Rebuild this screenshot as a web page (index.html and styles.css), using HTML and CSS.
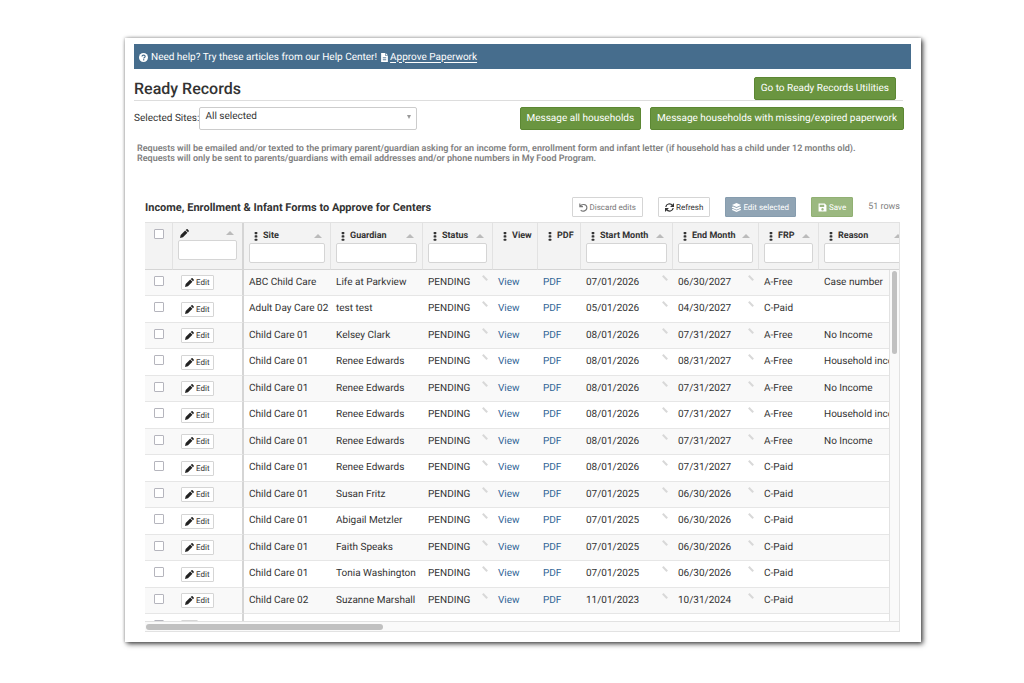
FILE: index.html
```
<!DOCTYPE html>
<html lang="en">

<head>
    <meta charset="UTF-8">
    <meta name="viewport" content="width=device-width, initial-scale=1.0">
    <title>Ready Records</title>
    <link rel="stylesheet" href="styles.css">
</head>

<body>
    <!-- Shared icons -->
    <svg class="sprite" aria-hidden="true">
        <symbol id="pencil" viewBox="0 0 16 16">
            <path d="M0 16l1.200-5.200L9.200 2.800l4 4L5.200 14.800z" />
            <path d="M10.200 1.800L11.500.6q1-.9 2 0l1.900 1.900q.9 1 0 2l-1.200 1.300z" />
        </symbol>
        <symbol id="sort" viewBox="0 0 8 4">
            <path d="M0 4L4 0l4 4z" />
        </symbol>
        <symbol id="dots" viewBox="0 0 4 10">
            <rect x=".5" y="0" width="3" height="2.400" rx=".6" />
            <rect x=".5" y="3.700" width="3" height="2.400" rx=".6" />
            <rect x=".5" y="7.400" width="3" height="2.400" rx=".6" />
        </symbol>
    </svg>

    <main class="page">
        <!-- Help bar -->
        <div class="help-bar">
            <svg class="icon" viewBox="0 0 16 16" aria-hidden="true">
                <circle cx="8" cy="8" r="8" fill="#fff" />
                <path d="M5.200 6.200C5.400 2.900 11 2.900 11 6.200 11 8.200 8.300 8 8.300 9.900" fill="none" stroke="#466d8d" stroke-width="2" />
                <rect x="7.200" y="11" width="2.200" height="2.200" fill="#466d8d" />
            </svg>
            <span>Need help? Try these articles from our Help Center!</span>
            <a href="#approve">
                <svg class="icon" viewBox="0 0 16 16" aria-hidden="true">
                    <path d="M2 0h7v5h5v11H2z" fill="#fff" />
                    <path d="M10 0l4 4h-4z" fill="#fff" />
                    <path d="M5 8.500h6M5 12h6" stroke="#466d8d" stroke-width="1.600" />
                </svg>
                <span>Approve Paperwork</span>
            </a>
        </div>

        <!-- Title -->
        <header class="title-row">
            <h1>Ready Records</h1>
            <button type="button" class="btn-green">Go to Ready Records Utilities</button>
        </header>

        <!-- Site selection and messages -->
        <div class="site-row">
            <label for="sites">Selected Sites:</label>
            <div class="select-wrap">
                <select id="sites">
                    <option>All selected</option>
                </select>
            </div>
            <div class="messages">
                <button type="button" class="btn-green">Message all households</button>
                <button type="button" class="btn-green">Message households with missing/expired paperwork</button>
            </div>
        </div>

        <p class="note">Requests will be emailed and/or texted to the primary parent/guardian asking for an income form, enrollment form and infant letter (if household has a child under 12 months old).<br>Requests will only be sent to parents/guardians with email addresses and/or phone numbers in My Food Program.</p>

        <!-- Forms to approve -->
        <section class="forms">
            <div class="toolbar">
                <h2>Income, Enrollment &amp; Infant Forms to Approve for Centers</h2>
                <button type="button" class="btn-tool discard">
                    <svg class="icon" viewBox="0 0 16 16" aria-hidden="true">
                        <path d="M1.500 1v5.500H7M2 6C4.500 1 13.500 1.500 14 8c0 6.500-7.500 8-11 4.500" fill="none" stroke="currentColor" stroke-width="2" />
                    </svg>Discard edits
                </button>
                <button type="button" class="btn-tool">
                    <svg class="icon" viewBox="0 0 16 16" aria-hidden="true">
                        <path d="M1.500 7C2 1.500 9.500-.5 13.500 4.500M14.500 9C14 14.500 6.500 16.500 2.500 11.500" fill="none" stroke="currentColor" stroke-width="2.200" />
                        <path d="M16 0v7H9zM0 16V9h7z" fill="currentColor" />
                    </svg>Refresh
                </button>
                <button type="button" class="btn-tool edit-selected">
                    <svg class="icon" viewBox="0 0 16 16" aria-hidden="true" fill="currentColor">
                        <path d="M8 0l8 3.600-8 3.600-8-3.600z" />
                        <path d="M0 7l2-.8 6 2.700 6-2.700 2 .8v1.500l-8 3.600-8-3.600z" />
                        <path d="M0 11.300l2-.8 6 2.700 6-2.700 2 .8v1L8 16l-8-3.700z" />
                    </svg>Edit selected
                </button>
                <button type="button" class="btn-tool save">
                    <svg class="icon" viewBox="0 0 16 16" aria-hidden="true">
                        <path d="M1 1h11l3 3v11H1zM3 3v4h8V3zM8 9a2.200 2.200 0 1 0 .1 0z" fill="currentColor" fill-rule="evenodd" />
                    </svg>Save
                </button>
                <span class="row-count">51 rows</span>
            </div>

            <div class="grid">
                <div class="grid-view">
                    <table>
                        <colgroup>
                            <col class="col-check">
                            <col class="col-edit">
                            <col class="col-site">
                            <col class="col-month">
                            <col class="col-status">
                            <col class="col-view">
                            <col class="col-pdf">
                            <col class="col-month">
                            <col class="col-end">
                            <col class="col-frp">
                            <col class="col-month">
                        </colgroup>
                        <thead>
                            <tr id="grid-head"></tr>
                        </thead>
                        <tbody id="grid-body"></tbody>
                    </table>
                    <div class="scroll-y"><div class="thumb"></div></div>
                </div>
                <div class="scroll-x"><div class="thumb"></div></div>
            </div>
        </section>
    </main>

    <script>
        const columns = ["Site", "Guardian", "Status", "View", "PDF", "Start Month", "End Month", "FRP", "Reason"];

        const records = [
            ["ABC Child Care", "Life at Parkview", "07/01/2026", "06/30/2027", "A-Free", "Case number"],
            ["Adult Day Care 02", "test test", "05/01/2026", "04/30/2027", "C-Paid", ""],
            ["Child Care 01", "Kelsey Clark", "08/01/2026", "07/31/2027", "A-Free", "No Income"],
            ["Child Care 01", "Renee Edwards", "08/01/2026", "08/31/2027", "A-Free", "Household income"],
            ["Child Care 01", "Renee Edwards", "08/01/2026", "07/31/2027", "A-Free", "No Income"],
            ["Child Care 01", "Renee Edwards", "08/01/2026", "07/31/2027", "A-Free", "Household income"],
            ["Child Care 01", "Renee Edwards", "08/01/2026", "07/31/2027", "A-Free", "No Income"],
            ["Child Care 01", "Renee Edwards", "08/01/2026", "07/31/2027", "C-Paid", ""],
            ["Child Care 01", "Susan Fritz", "07/01/2025", "06/30/2026", "C-Paid", ""],
            ["Child Care 01", "Abigail Metzler", "07/01/2025", "06/30/2026", "C-Paid", ""],
            ["Child Care 01", "Faith Speaks", "07/01/2025", "06/30/2026", "C-Paid", ""],
            ["Child Care 01", "Tonia Washington", "07/01/2025", "06/30/2026", "C-Paid", ""],
            ["Child Care 02", "Suzanne Marshall", "11/01/2023", "10/31/2024", "C-Paid", ""]
        ];

        const sortIcon = `<svg class="sort"><use href="#sort"/></svg>`;
        const mark = `<svg class="mark" viewBox="0 0 6 6"><path d="M.8.8L5.200 5.200"/></svg>`;

        function renderHead() {
            const cells = columns.map(name => {
                const plain = name === "View" || name === "PDF";
                return `<th>
                    <div class="head-title"><svg class="dots"><use href="#dots"/></svg><span>${name}</span>${plain ? "" : sortIcon}</div>
                    ${plain ? "" : `<input type="text" class="filter" aria-label="Filter ${name}">`}
                </th>`;
            });

            document.getElementById("grid-head").innerHTML = `
                <th class="check"><input type="checkbox" aria-label="Select all rows"></th>
                <th class="edit-head">
                    <div class="head-title"><svg class="pencil"><use href="#pencil"/></svg>${sortIcon}</div>
                    <input type="text" class="filter" aria-label="Filter edit">
                </th>` + cells.join('');
        }

        function renderRows() {
            // the last row sits mostly below the visible area
            const rows = records.concat([["", "", "", "", "", ""]]);

            document.getElementById("grid-body").innerHTML = rows.map(([site, guardian, start, end, frp, reason]) => `
                <tr>
                    <td class="check"><input type="checkbox" aria-label="Select row"></td>
                    <td class="edit"><button type="button" aria-label="Edit"><svg class="pencil"><use href="#pencil"/></svg>${site && "Edit"}</button></td>
                    <td>${site}</td>
                    <td>${guardian}</td>
                    <td><div class="editable"><span>${site && "PENDING"}</span>${mark}</div></td>
                    <td><a href="#view">${site && "View"}</a></td>
                    <td><a href="#pdf">${site && "PDF"}</a></td>
                    <td><div class="editable"><span>${start}</span>${mark}</div></td>
                    <td><div class="editable"><span>${end}</span>${mark}</div></td>
                    <td>${frp}</td>
                    <td>${reason}</td>
                </tr>
            `).join('');
        }

        renderHead();
        renderRows();
    </script>
</body>

</html>
```
FILE: styles.css
```
/* General Styles */
* {
    margin: 0;
    padding: 0;
    box-sizing: border-box;
}

body {
    font-family: Roboto, sans-serif;
    font-size: 10px;
    text-rendering: geometricPrecision;
    background: #ffffff;
    color: #333;
    padding: 38px 103px 42px 125px;
}

button,
input,
select {
    font-family: inherit;
    color: inherit;
    text-rendering: inherit;
}

button {
    cursor: pointer;
    display: flex;
    align-items: center;
    justify-content: center;
    white-space: nowrap;
}

a {
    color: #2f6496;
    text-decoration: none;
}

.sprite {
    display: none;
}

.icon {
    width: 9px;
    height: 9px;
    flex: none;
}

.page {
    background: #ffffff;
    padding: 6px 10px 10px 9px;
    box-shadow: 2px 2px 5px rgba(0, 0, 0, 0.7), 0 0 3px rgba(0, 0, 0, 0.3);
}

/* Help bar */
.help-bar {
    display: flex;
    align-items: center;
    height: 25px;
    padding: 1px 5px 0;
    gap: 3px;
    background: #466d8d;
    color: #ffffff;
}

.help-bar a {
    display: flex;
    align-items: center;
    gap: 1px;
    color: #ffffff;
}

.help-bar a span {
    text-decoration: underline;
    text-underline-offset: 2px;
}

/* Title */
.title-row {
    display: flex;
    justify-content: space-between;
    align-items: flex-end;
    height: 32px;
    padding: 0 7px 0 0;
    margin: 0 8px 0 0;
    border-bottom: 1px solid #dddddd;
}

.title-row h1 {
    padding-bottom: 2px;
    font-size: 16px;
    font-weight: 500;
}

.btn-green {
    height: 23px;
    padding: 0 6px;
    font-size: 10px;
    font-weight: 400;
    color: #ffffff;
    background: #6a9540;
    border: 1px solid #5c8733;
    border-radius: 2px;
}

/* Site selection */
.site-row {
    display: flex;
    align-items: center;
    margin: 6px 7px 0 0;
}

.select-wrap {
    position: relative;
    width: 218px;
}

.select-wrap::after {
    content: "";
    position: absolute;
    right: 6px;
    top: 8px;
    border: 2px solid transparent;
    border-top: 4px solid #999999;
    border-bottom: 0;
}

.select-wrap select {
    appearance: none;
    display: block;
    width: 100%;
    height: 23px;
    padding: 0 5px 4px;
    font-size: 10px;
    background: #ffffff;
    border: 1px solid #cccccc;
    border-radius: 2px;
}

.messages {
    display: flex;
    gap: 9px;
    margin-left: auto;
}

.note {
    padding: 14px 0 0 3px;
    font-size: 9px;
    font-weight: 600;
    line-height: 10px;
    color: #808080;
}

/* Toolbar */
.forms {
    margin: 33px 11px 0 11px;
}

.toolbar {
    display: flex;
    align-items: center;
    height: 20px;
    gap: 15px;
}

.toolbar h2 {
    flex: 1;
    font-size: 11px;
    font-weight: 700;
    white-space: nowrap;
}

.btn-tool {
    height: 20px;
    padding: 0 6px;
    gap: 2px;
    font-size: 8px;
    background: #ffffff;
    border: 1px solid #d5d5d5;
    border-radius: 1px;
}

.btn-tool.discard {
    color: #777777;
}

.btn-tool.edit-selected {
    color: #ffffff;
    background: #90a4b4;
    border-color: #869cae;
}

.btn-tool.save {
    color: #ffffff;
    background: #9bb880;
    border-color: #91b073;
}

.row-count {
    font-size: 9px;
    color: #808080;
}

/* Grid */
.grid {
    margin-top: 5px;
    border: 1px solid #e2e2e2;
    border-left: 0;
    background: #fafafa;
}

.grid-view {
    position: relative;
    height: 398px;
    overflow: hidden;
}

.grid table {
    width: 766px;
    table-layout: fixed;
    border-collapse: separate;
    border-spacing: 0;
}

.col-check { width: 28px; }
.col-edit { width: 71px; }
.col-site { width: 87px; }
.col-month { width: 92px; }
.col-status { width: 70px; }
.col-view { width: 45px; }
.col-pdf { width: 43px; }
.col-end { width: 86px; }
.col-frp { width: 60px; }

.grid th {
    height: 47px;
    padding: 8px 5px 0;
    vertical-align: top;
    text-align: left;
    font-size: 9px;
    font-weight: 700;
    background: #f3f3f3;
    border-right: 1px solid #e2e2e2;
    border-bottom: 1px solid #d5d5d5;
}

.grid td {
    height: 26px;
    padding: 0 5px;
    line-height: 16px;
    white-space: nowrap;
    border-bottom: 1px solid #e6e6e6;
    background: #ffffff;
}

/* rows step by 26 and 27px */
.grid tr:nth-child(even) td {
    height: 27px;
}

.grid tr:nth-child(odd) td {
    background: #f9f9f9;
}

.grid tr:last-child td {
    background: #ffffff;
}

.grid tr > :nth-child(2) {
    border-right: 2px solid #d5d5d5;
}

.grid .check {
    padding-top: 6px;
    padding-left: 9px;
    vertical-align: top;
}

.grid input[type="checkbox"] {
    appearance: none;
    display: block;
    width: 10px;
    height: 10px;
    background: #ffffff;
    border: 1px solid #b5b5bd;
    border-radius: 1px;
}

.head-title {
    display: flex;
    align-items: center;
    height: 10px;
    gap: 5px;
    padding: 0 3px 0 5px;
    white-space: nowrap;
}

.grid .edit-head {
    padding-top: 5px;
}

.edit-head .head-title {
    padding-left: 2px;
}

.dots {
    width: 4px;
    height: 9px;
    flex: none;
    fill: #333333;
}

.sort {
    width: 8px;
    height: 4px;
    margin-left: auto;
    fill: #bbbbbb;
}

.pencil {
    width: 9px;
    height: 9px;
    fill: #222222;
}

.filter {
    display: block;
    width: 100%;
    height: 20px;
    margin-top: 2px;
    padding: 0 4px;
    font-size: 9px;
    background: #ffffff;
    border: 1px solid #d5d5d5;
    border-radius: 2px;
}

.grid td.edit {
    padding-left: 8px;
}

.edit button {
    height: 15px;
    padding: 0 3px;
    gap: 2px;
    font-size: 8px;
    background: #ffffff;
    border: 1px solid #d5d5d5;
    border-radius: 1px;
}

.editable {
    display: flex;
    justify-content: space-between;
    align-items: flex-start;
}

.mark {
    width: 6px;
    height: 6px;
    fill: none;
    stroke: #d8d8d8;
    stroke-width: 2;
}

/* Scrollbars */
.scroll-y {
    position: absolute;
    top: 47px;
    right: 0;
    bottom: 0;
    width: 10px;
    padding: 1px 2px;
    background: #fafafa;
    border-left: 1px solid #e2e2e2;
}

.scroll-y .thumb {
    height: 83px;
    background: #c1c1c1;
    border-radius: 3px;
}

.scroll-x {
    height: 10px;
    padding: 2px 1px;
    border-top: 1px solid #e2e2e2;
}

.scroll-x .thumb {
    width: 237px;
    height: 6px;
    background: #c1c1c1;
    border-radius: 3px;
}
```
